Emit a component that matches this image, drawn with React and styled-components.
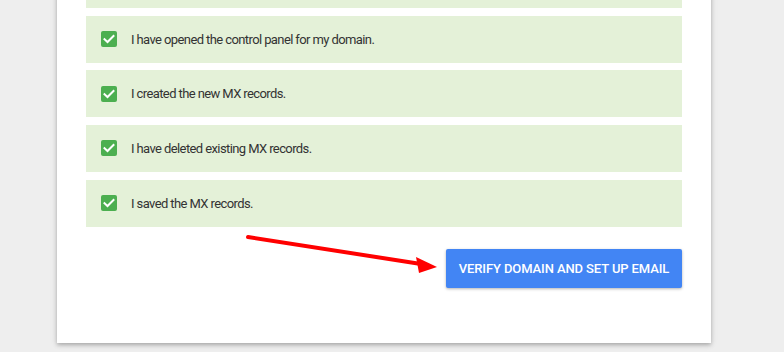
import React from "react";
import styled, { createGlobalStyle } from "styled-components";

const Global = createGlobalStyle`
  html, body { margin: 0; padding: 0; }
  body {
    background: #eeeeee;
    font-family: Roboto, "Liberation Sans", Arial, sans-serif;
    overflow: hidden;
    width: 784px;
    height: 352px;
  }
`;

const Page = styled.div`
  width: 784px;
  height: 352px;
  overflow: hidden;
  position: relative;
`;

const Card = styled.div`
  margin-left: 57px;
  width: 654px;
  background: #ffffff;
  box-shadow: 0 2px 4px rgba(0, 0, 0, 0.25), 0 1px 8px rgba(0, 0, 0, 0.08);
  padding: 0 29px 55px;
  box-sizing: border-box;
  margin-top: -39px;
`;

const List = styled.div`
  display: flex;
  flex-direction: column;
  gap: 7.67px;
`;

const Row = styled.div`
  height: 47px;
  background: #e4f1d8;
  display: flex;
  align-items: center;
  padding-left: 15px;
  gap: 14px;
`;

const Box = styled.span`
  width: 16px;
  height: 16px;
  border-radius: 2px;
  background: #4caf50;
  display: flex;
  align-items: center;
  justify-content: center;
  flex-shrink: 0;
`;

const Label = styled.span`
  font-size: 13px;
  color: #333333;
  letter-spacing: -0.6px;
`;

const Footer = styled.div`
  position: relative;
  display: flex;
  justify-content: flex-end;
  padding-top: 22px;
`;

const Button = styled.button`
  width: 236px;
  height: 39px;
  border: none;
  border-radius: 2px;
  background: #4285f4;
  color: #ffffff;
  font-family: Roboto, "Liberation Sans", Arial, sans-serif;
  font-weight: 500;
  font-size: 13px;
  text-transform: uppercase;
  letter-spacing: -0.1px;
  box-shadow: 0 1px 3px rgba(0, 0, 0, 0.3);
  padding: 0;
`;

const Arrow = styled.svg`
  position: absolute;
  left: 0;
  top: 0;
  width: 654px;
  height: 80px;
  pointer-events: none;
  overflow: visible;
`;

const Check = () => (
  <svg width="12" height="10" viewBox="0 0 12 10">
    <path d="M1.5 5.2 L4.5 8 L10.5 2" fill="none" stroke="#fff" strokeWidth="2" strokeLinecap="square" />
  </svg>
);

const items = [
  "I have confirmed my domain.",
  "I have opened the control panel for my domain.",
  "I created the new MX records.",
  "I have deleted existing MX records.",
  "I saved the MX records.",
];

export default function App() {
  return (
    <Page>
      <Global />
      <Card>
        <List>
          {items.map((t) => (
            <Row key={t}>
              <Box><Check /></Box>
              <Label>{t}</Label>
            </Row>
          ))}
        </List>
        <Footer>
          <Arrow viewBox="0 0 654 80">
            <line x1="162" y1="10" x2="335" y2="37" stroke="#ff0000" strokeWidth="4" strokeLinecap="round" />
            <polygon points="351,40 330,30 333,46" fill="#ff0000" />
          </Arrow>
          <Button>Verify domain and set up email</Button>
        </Footer>
      </Card>
    </Page>
  );
}
